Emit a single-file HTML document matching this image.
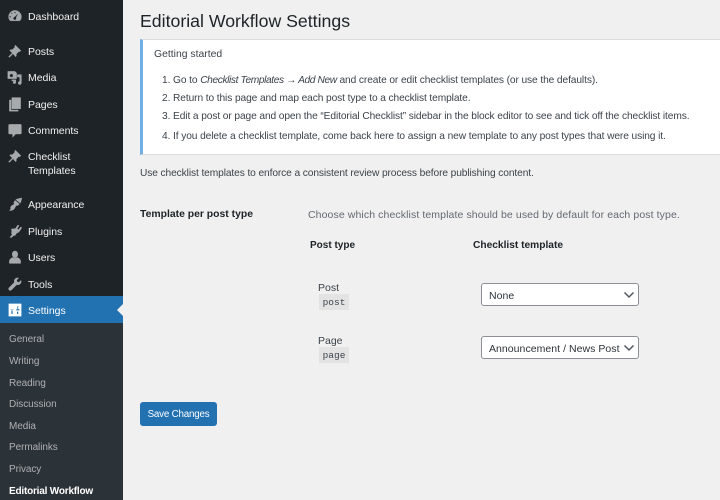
<!DOCTYPE html>
<html><head><meta charset="utf-8"><style>
html,body{margin:0;padding:0;width:720px;height:500px;overflow:hidden;background:#f0f0f0;font-family:"Liberation Sans",sans-serif;font-size:11px;color:#3c434a}
#bg{position:absolute;left:0;top:0;width:720px;height:500px;background:#f0f0f0}
.t{position:absolute;white-space:nowrap;line-height:14px}
#side{position:absolute;left:0;top:0;width:123px;height:500px;background:#1d2327}
#sub{position:absolute;left:0;top:323px;width:123px;height:177px;background:#2c3338}
#cur{position:absolute;left:0;top:296px;width:123px;height:27px;background:#2271b1}
.m{color:#f0f0f1;left:28px;font-size:10.5px;letter-spacing:-.03px}
.s{color:#c3c4c7;left:9px;font-size:10px;letter-spacing:-.08px;opacity:.85}
svg.i{position:absolute;left:7px;width:16px;height:16px;fill:#a7aaad;stroke:#a7aaad;stroke-width:.5}
#notice{position:absolute;left:140px;top:39px;width:580px;height:116px;background:#fff;border:1px solid #dcdcde;border-left:3px solid #72aee6;border-right:none;box-sizing:border-box}
.n{font-size:10.2px;letter-spacing:-.1px;color:#3c434a}
.n i{letter-spacing:-.38px}
.sel{position:absolute;left:481px;width:158px;height:23px;box-sizing:border-box;background:#fff;border:1px solid #8c8f94;border-radius:3px}
.sel span{position:absolute;left:7px;top:4px;line-height:16px;font-size:10.5px;letter-spacing:.04px;color:#2c3338;white-space:nowrap}
.sel svg{position:absolute;right:3px;top:6px}
code{position:absolute;left:319px;width:30px;height:16px;background:#e3e3e3;font-family:"Liberation Mono",monospace;font-size:9.5px;line-height:17px;text-align:center;color:#3c434a}
#btn{position:absolute;left:140px;top:402px;width:77px;height:24px;background:#2271b1;border-radius:3px;color:#fff;text-align:center;line-height:25px;font-size:9.8px;letter-spacing:-.2px}
</style></head><body>
<div id="bg"></div>
<div id="side"></div><div id="sub"></div><div id="cur"></div>
<svg style="position:absolute;left:117px;top:304px" width="6" height="12"><path d="M6 0L0 6l6 6z" fill="#f0f0f1"/></svg>

<svg class="i" style="top:8px" viewBox="0 0 20 20"><path d="M10 3a8 8 0 0 0-8 8c0 2 .8 3.900 2 5h12c1.200-1.100 2-3 2-5a8 8 0 0 0-8-8zM6 5.500l1 1-1 1-1-1zM10 4.500a1 1 0 1 1 0 2 1 1 0 0 1 0-2zM4 10a1 1 0 1 1 0 2 1 1 0 0 1 0-2zM14.500 6l-3 6a2 2 0 1 1-2-1z"/></svg>
<div class="t m" style="top:10px">Dashboard</div>

<svg class="i" style="top:43px" viewBox="0 0 20 20"><path d="M10.400 2.600l7 7-1.400 1.400-1-.6-3.500 3.500c.5 1.300.3 2.400-.7 3.300L7.500 13.400 3 18l-1-.9 4.600-4.600-3.300-3.300c.9-1 2-1.200 3.300-.7L10.100 5l-.6-1z"/></svg>
<div class="t m" style="top:45px">Posts</div>

<svg class="i" style="top:69px" viewBox="0 0 20 20"><path d="M1 3h9l2 2v7H1zM5.500 6a2.200 2.200 0 1 0 0 4.400 2.200 2.200 0 0 0 0-4.400zM13 7h5v10.500a2 2 0 1 1-2-2V10h-3zM6 13.500h5v3a1.700 1.700 0 1 1-1.500-1.600H6z"/></svg>
<div class="t m" style="top:71px">Media</div>

<svg class="i" style="top:96px" viewBox="0 0 20 20"><path d="M6 2h11v14H6z"/><path d="M3 5h2v12.500h9V19H3z"/></svg>
<div class="t m" style="top:98px">Pages</div>

<svg class="i" style="top:122px" viewBox="0 0 20 20"><path d="M3 3h14a1 1 0 0 1 1 1v10a1 1 0 0 1-1 1h-6l-4 4v-4H3a1 1 0 0 1-1-1V4a1 1 0 0 1 1-1z"/></svg>
<div class="t m" style="top:124px">Comments</div>

<svg class="i" style="top:148px" viewBox="0 0 20 20"><path d="M10.400 2.600l7 7-1.400 1.400-1-.6-3.500 3.500c.5 1.300.3 2.400-.7 3.300L7.500 13.400 3 18l-1-.9 4.600-4.600-3.300-3.300c.9-1 2-1.200 3.300-.7L10.100 5l-.6-1z"/></svg>
<div class="t m" style="top:150px">Checklist</div>
<div class="t m" style="top:164px">Templates</div>

<svg class="i" style="top:196px" viewBox="0 0 20 20"><path d="M18.500 2.500c-.5 2.500-1 5-2 6.500L11 4.500c2-1 5-1.700 7.500-2zM10 5.500l5.500 4.500-2 2-1-.5c-1 .5-2 1.500-2.500 3-.5 1.500-2 3-4 3.500-1 .2-2 .2-3 0 1.500-1 2-2 1.500-3-.3-1 0-2 1.500-3 1.500-1 2.500-1 3-2.500l-.5-1.500z"/></svg>
<div class="t m" style="top:198px">Appearance</div>

<svg class="i" style="top:223px" viewBox="0 0 20 20"><path d="M13.500 2.500l1.500 1-2.500 3.500 2 1.500 2.500-3.500 1.500 1-3 4.500c-.8 1.200-2 1.800-3.200 1.800l-1.800 2.700c-.5.700-1.500 1-2.300.7L6 18H3.500l3-3.500c-1-1-1.300-2-.5-3.200l-.5-3.800L10.500 7z"/></svg>
<div class="t m" style="top:225px">Plugins</div>

<svg class="i" style="top:249px" viewBox="0 0 20 20"><path d="M10 2.500c2.200 0 3.500 1.800 3.500 4s-1.500 4.500-3.500 4.500-3.500-2.300-3.500-4.500 1.300-4 3.500-4zM3 15c0-2 2.500-4 4.500-4.500.7.800 1.500 1.200 2.500 1.200s1.800-.4 2.500-1.200c2 .5 4.500 2.500 4.500 4.500v3H3z"/></svg>
<div class="t m" style="top:251px">Users</div>

<svg class="i" style="top:276px" viewBox="0 0 20 20"><path d="M17.500 5.500c.5 1.500.2 3.200-1 4.400-1.200 1.200-2.900 1.500-4.400 1l-6.600 6.600c-.8.800-2.100.8-2.900 0s-.8-2.100 0-2.900l6.600-6.600c-.5-1.500-.2-3.200 1-4.400 1.200-1.200 2.900-1.500 4.400-1L12 5.200l.7 2.100 2.100.7z"/></svg>
<div class="t m" style="top:278px">Tools</div>

<svg class="i" style="top:302px;fill:#fff;stroke:none" viewBox="0 0 20 20"><path fill-rule="evenodd" d="M2 2h16v16H2zM5.500 9v6h1.500V9H8.500L6.250 11 4 9zM13 5v4h-1.500v1.500h4V9H14V5zM12.500 12v3h1.500v-3z"/></svg>
<div class="t m" style="top:304px;color:#fff">Settings</div>

<div class="t s" style="top:333px">General</div>
<div class="t s" style="top:355px">Writing</div>
<div class="t s" style="top:377px">Reading</div>
<div class="t s" style="top:398px">Discussion</div>
<div class="t s" style="top:420px">Media</div>
<div class="t s" style="top:441px">Permalinks</div>
<div class="t s" style="top:463px">Privacy</div>
<div class="t s" style="top:485px;color:#fff;font-weight:bold;opacity:1;letter-spacing:-.2px">Editorial Workflow</div>

<div class="t" style="left:140px;top:9px;font-size:17.7px;line-height:24px;color:#1d2327">Editorial Workflow Settings</div>
<div id="notice"></div>
<div class="t" style="left:154px;top:48px;font-size:10.4px;color:#3c434a">Getting started</div>
<div class="t n" style="left:162px;top:74px">1. Go to <i>Checklist Templates → Add New</i> and create or edit checklist templates (or use the defaults).</div>
<div class="t n" style="left:162px;top:92px">2. Return to this page and map each post type to a checklist template.</div>
<div class="t n" style="left:162px;top:110px">3. Edit a post or page and open the “Editorial Checklist” sidebar in the block editor to see and tick off the checklist items.</div>
<div class="t n" style="left:162px;top:130px">4. If you delete a checklist template, come back here to assign a new template to any post types that were using it.</div>
<div class="t n" style="left:140px;top:167px">Use checklist templates to enforce a consistent review process before publishing content.</div>
<div class="t" style="left:140px;top:208px;font-size:10.4px;font-weight:bold;color:#1d2327">Template per post type</div>
<div class="t" style="left:308px;top:208px;font-size:10.5px;letter-spacing:.1px;color:#646970">Choose which checklist template should be used by default for each post type.</div>
<div class="t" style="left:310px;top:239px;font-size:10px;font-weight:bold;color:#1d2327">Post type</div>
<div class="t" style="left:473px;top:239px;font-size:10.2px;font-weight:bold;color:#1d2327">Checklist template</div>

<div class="t" style="left:318px;top:281px;font-size:10.5px">Post</div>
<code style="top:294px">post</code>
<div class="sel" style="top:283px"><span>None</span><svg width="12" height="10" viewBox="0 0 12 10"><path d="M1.500 2.500L6 7l4.500-4.500" fill="none" stroke="#50575e" stroke-width="1.500"/></svg></div>

<div class="t" style="left:318px;top:334px;font-size:10.5px">Page</div>
<code style="top:347px">page</code>
<div class="sel" style="top:336px"><span>Announcement / News Post</span><svg width="12" height="10" viewBox="0 0 12 10"><path d="M1.500 2.500L6 7l4.500-4.500" fill="none" stroke="#50575e" stroke-width="1.500"/></svg></div>

<div id="btn">Save Changes</div>
</body></html>
